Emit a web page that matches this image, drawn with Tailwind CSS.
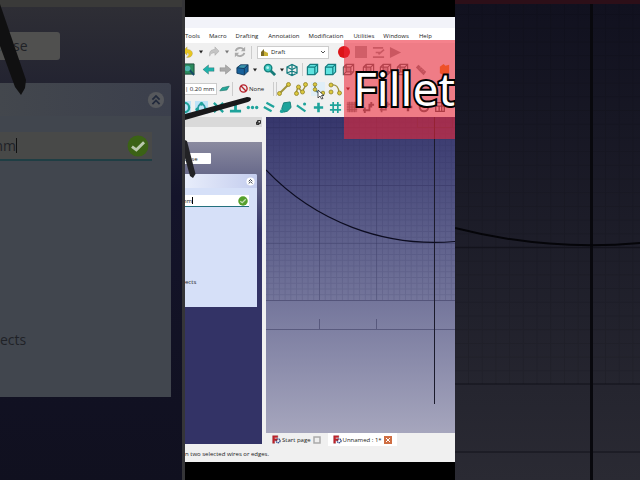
<!DOCTYPE html>
<html lang="en">

<head>
    <meta charset="UTF-8">
    <meta name="viewport" content="width=device-width, initial-scale=1.0">
    <script src="https://cdn.jsdelivr.net/npm/@tailwindcss/browser@4"></script>
    <title>Fillet</title>
</head>

<body class="bg-black font-['Open_Sans','Noto_Sans',sans-serif] text-[6px] leading-[8px] text-[#222]">

    <!-- icon sprite -->
    <svg class="hidden">
        <symbol id="undo" viewBox="0 0 14 14"><path d="M1 6l5-5v3c5 0 7 3 6 6s-4 4-7 3c3 0 4-4 1-5v3z" fill="currentColor" stroke="#0003" stroke-width=".6" /></symbol>
        <symbol id="redo" viewBox="0 0 14 14"><path d="M13 6L8 1v3C3 4 1 7 2 12c1-3 3-4 6-4v3z" fill="currentColor" stroke="#0003" stroke-width=".6" /></symbol>
        <symbol id="refresh" viewBox="0 0 14 14"><path d="M2 6c1-4 7-5 9-2M12 8c-1 4-7 5-9 2" fill="none" stroke="currentColor" stroke-width="2.200" /><path d="M13 1v5H8zM1 13V8h5z" fill="currentColor" /></symbol>
        <symbol id="left" viewBox="0 0 14 14"><path d="M1 7l6-5v3h6v4H7v3z" fill="currentColor" stroke="#0005" stroke-width=".6" /></symbol>
        <symbol id="right" viewBox="0 0 14 14"><path d="M13 7L7 2v3H1v4h6v3z" fill="currentColor" stroke="#0004" stroke-width=".6" /></symbol>
        <symbol id="caret" viewBox="0 0 6 4"><path d="M1 .5h4L3 3.500z" fill="currentColor" /></symbol>
        <symbol id="solid" viewBox="0 0 14 14"><path d="M1 5l4-3 8 0v7l-4 4-8-2z" fill="#17619b" stroke="#123a5c" /><path d="M1 5l8 1v7M9 6l4-4" stroke="#123a5c" fill="none" /><path d="M2.500 4.500l3-2h6l-3 3z" fill="#3b93a8" /></symbol>
        <symbol id="zoom" viewBox="0 0 14 14"><path d="M8 8l5 5" stroke="#167a78" stroke-width="3" /><circle cx="5.500" cy="5.500" r="4" fill="#3cc7c0" stroke="#13807c" stroke-width="1.500" /><circle cx="5" cy="5" r="1.500" fill="#b5f2ee" /></symbol>
        <symbol id="wire" viewBox="0 0 14 14"><path d="M2 4l5-2.500L12 4v6l-5 2.500L2 10zM2 4l5 2.500L12 4M7 6.500v6M7 1.500v4M2 10l5-2 5 2" fill="none" stroke="currentColor" stroke-width="1.300" /></symbol>
        <symbol id="face" viewBox="0 0 14 14"><path d="M1.500 4.500l3-3h8v8l-3 3h-8z" fill="#5fe3e0" stroke="currentColor" stroke-width="1.300" /><path d="M1.500 4.500h8v8M9.500 4.500l3-3" fill="none" stroke="currentColor" stroke-width="1.300" /></symbol>
        <symbol id="face-wire" viewBox="0 0 14 14"><path d="M1.500 4.500l3-3h8v8l-3 3h-8zM1.500 4.500h8v8M9.500 4.500l3-3M4.500 1.500v8h8M4.500 9.500l-3 3" fill="none" stroke="currentColor" stroke-width="1.300" /><path d="M5 5h4v4H5z" fill="currentColor" fill-opacity=".4" /></symbol>
        <symbol id="ruler" viewBox="0 0 14 14"><path d="M1 4l3-3 9 8-3 4z" fill="currentColor" /><path d="M5 5l2-1M7 7l2-1M9 9l2-1" stroke="#fff6" /></symbol>
        <symbol id="line" viewBox="0 0 14 14"><path d="M3 11l8-8" stroke="#a0933c" stroke-width="2" /><g fill="#dcc83c" stroke="#8f8128" stroke-width=".8"><circle cx="2.500" cy="11.500" r="2" /><circle cx="11.500" cy="2.500" r="2" /></g></symbol>
        <symbol id="poly" viewBox="0 0 14 14"><path d="M2 11l2-6 4 5 4-7" fill="none" stroke="#a0933c" stroke-width="1.500" /><g fill="#dcc83c" stroke="#8f8128" stroke-width=".8"><circle cx="2.500" cy="11.500" r="2" /><circle cx="4.500" cy="5" r="2" /><circle cx="8.500" cy="10" r="2" /><circle cx="11.500" cy="2.500" r="2" /></g></symbol>
        <symbol id="fillet" viewBox="0 0 14 14"><path d="M4 2v4c0 3 2 5 8 5" fill="none" stroke="#4f7d8c" stroke-width="1.500" /><g fill="#dcc83c" stroke="#8f8128" stroke-width=".8"><circle cx="4" cy="2.500" r="1.800" /><circle cx="4" cy="7.500" r="1.800" /><circle cx="12" cy="11" r="1.800" /></g></symbol>
        <symbol id="arc" viewBox="0 0 14 14"><path d="M3 3c5-1 8 2 8 8" fill="none" stroke="#a0933c" stroke-width="1.300" /><g fill="#dcc83c" stroke="#8f8128" stroke-width=".8"><circle cx="3" cy="3" r="2" /><circle cx="3" cy="10" r="2" /><circle cx="11.500" cy="11" r="2" /></g></symbol>
        <symbol id="plane" viewBox="0 0 14 14"><path d="M1 10l3-4 9-2-3 5z" fill="#25a99a" stroke="#157066" stroke-width=".8" /></symbol>
        <symbol id="snap-poly" viewBox="0 0 14 14"><path d="M2 11L4 5l3-3 3 3 2 6" fill="none" stroke="#2696a0" stroke-width="1.800" /><g fill="currentColor"><circle cx="2.500" cy="9" r="2" /><circle cx="7" cy="3" r="2" /><circle cx="11.500" cy="9" r="2" /></g></symbol>
        <symbol id="snap-cross" viewBox="0 0 14 14"><path d="M2 2l10 10M12 2L2 12" stroke="currentColor" stroke-width="2.500" /><circle cx="7" cy="7" r="2.500" fill="currentColor" /></symbol>
        <symbol id="snap-perp" viewBox="0 0 14 14"><path d="M7 2v8M1 11h12" stroke="currentColor" stroke-width="3" /></symbol>
        <symbol id="snap-dots" viewBox="0 0 14 14"><g fill="currentColor"><circle cx="2.500" cy="7" r="1.800" /><circle cx="7" cy="7" r="1.800" /><circle cx="11.500" cy="7" r="1.800" /></g></symbol>
        <symbol id="snap-par" viewBox="0 0 14 14"><path d="M4 2l9 5M1 7l9 5" stroke="currentColor" stroke-width="2.500" /></symbol>
        <symbol id="snap-special" viewBox="0 0 14 14"><path d="M3 8l2-6 7-1 1 6-4 4-4 1z" fill="currentColor" stroke="#137f78" /><circle cx="3" cy="11" r="2" fill="currentColor" /></symbol>
        <symbol id="snap-near" viewBox="0 0 14 14"><path d="M1 5l10 7" stroke="currentColor" stroke-width="2.500" /><circle cx="10" cy="3.500" r="1.800" fill="currentColor" /></symbol>
        <symbol id="plus" viewBox="0 0 14 14"><path d="M7 2v10M2 7h10" stroke="currentColor" stroke-width="2.800" /></symbol>
        <symbol id="hash" viewBox="0 0 14 14"><path d="M4.500 1v12M9.500 1v12M1 4.500h12M1 9.500h12" stroke="currentColor" stroke-width="1.800" /></symbol>
        <symbol id="grid" viewBox="0 0 14 14"><path d="M1 1h12v12H1z" fill="currentColor" fill-opacity=".6" /><path d="M1 4h12M1 7h12M1 10h12M4 1v12M7 1v12M10 1v12" stroke="currentColor" /></symbol>
        <symbol id="dims" viewBox="0 0 14 14"><path d="M1 10h7V4h5M3 7v6M10 1v6" fill="none" stroke="currentColor" stroke-width="2" /></symbol>
        <symbol id="ring" viewBox="0 0 14 14"><circle cx="7" cy="7" r="5" fill="none" stroke="currentColor" stroke-width="2.500" /></symbol>
        <symbol id="table" viewBox="0 0 14 14"><path d="M2 2h10v10H2zM2 6h10M6 6v6M9 2v10" fill="none" stroke="currentColor" stroke-width="1.500" /></symbol>
        <symbol id="chevrons" viewBox="0 0 20 20"><circle cx="10" cy="10" r="9" fill="currentColor" /><path d="M6 9.500l4-4 4 4M6 14.500l4-4 4 4" fill="none" stroke="#222a3c" stroke-width="2" /></symbol>
        <symbol id="check" viewBox="0 0 20 20"><circle cx="10" cy="10" r="9.500" fill="currentColor" /><path d="M4.500 10.500l4 3 7-7" fill="none" stroke="#fff" stroke-opacity=".65" stroke-width="2.600" /></symbol>
        <symbol id="freecad" viewBox="0 0 14 14"><circle cx="9.500" cy="9" r="3" fill="none" stroke="#35518f" stroke-width="2.200" stroke-dasharray="2 .7" /><path d="M1 1h8v3H4v2h4v2.500H4V13H1z" fill="#c4232b" stroke="#7d1118" stroke-width=".5" /></symbol>
    </svg>

    <div class="grid min-h-screen grid-cols-[185fr_270fr_185fr]">

        <!-- enlarged dark backdrop, left half -->
        <aside class="relative flex flex-col overflow-hidden border-r-3 border-[#353538] bg-[#11111f] text-[14px] leading-[18px] text-[#202227]">
            <div class="h-[7px] shrink-0 bg-[#3a3a39]"></div>
            <div class="flex-1 bg-linear-to-b from-[#2e2e35] via-[#14142a] via-40% to-[#10101f] pt-[25px] pr-[11px]">
                <button class="-ml-[40px] block h-[28px] w-[100px] rounded-r-[3px] bg-[#50504f] text-center">Close</button>
                <section class="mt-[23px] h-[314px] rounded-tr-[4px] bg-[#41464e]">
                    <header class="flex h-[33px] items-center justify-end rounded-tr-[4px] bg-linear-to-r from-[#43474d] to-[#3b3f4c] pr-[6px]">
                        <button aria-label="Collapse"><svg class="size-[18px] text-[#56585c]"><use href="#chevrons" /></svg></button>
                    </header>
                    <div class="mt-[16px] mr-[19px] flex h-[29px] items-center border-b-2 border-[#1f3e44] bg-[#484948] pr-[3px]">
                        <input aria-label="Radius" value="mm" class="-ml-[10px] h-[18px] w-[26px] outline-none">
                        <span class="h-[15px] w-px bg-[#111]"></span>
                        <svg class="ml-auto size-[22px] text-[#3b6215]"><use href="#check" /></svg>
                    </div>
                    <p class="mt-[170px]">ects</p>
                </section>
            </div>
            <svg class="absolute top-0 left-0 h-[100px] w-[30px]" viewBox="0 0 30 100"><path d="M0 4l26 76-1 8-4 7-6-8L0 46z" fill="#101011" /></svg>
        </aside>

        <!-- application window -->
        <main class="relative flex min-w-0 flex-col overflow-hidden border-t-[17px] border-b-[18px] border-black bg-[#f0f0f0]">
            <div class="h-[11px] shrink-0 bg-[#f2f3f9]"></div>
            <nav class="flex h-[15px] shrink-0 items-center gap-[9px] bg-white">
                <button>Tools</button>
                <button>Macro</button>
                <button>Drafting</button>
                <button class="ml-px">Annotation</button>
                <button>Modification</button>
                <button class="ml-px">Utilities</button>
                <button>Windows</button>
                <button class="ml-px">Help</button>
            </nav>

            <div class="-ml-[3px] flex h-[18px] shrink-0 items-center text-[#aaa]">
                <button aria-label="Undo"><svg class="size-[12px] text-[#e7c521]"><use href="#undo" /></svg></button>
                <svg class="mx-1 h-[4px] w-[6px] text-[#222]"><use href="#caret" /></svg>
                <button aria-label="Redo"><svg class="size-[12px] text-[#c4c4c4]"><use href="#redo" /></svg></button>
                <svg class="mx-1 h-[4px] w-[6px] text-[#777]"><use href="#caret" /></svg>
                <button aria-label="Refresh"><svg class="size-[12px]"><use href="#refresh" /></svg></button>
                <div class="mx-[5px] h-[13px] w-px bg-[#ccc]"></div>
                <div class="mr-[9px] flex h-[13px] w-[72px] items-center border border-[#ccc] bg-white px-[2px]">
                    <svg class="size-[9px]" viewBox="0 0 9 9"><path d="M1 8V4l3-3v7z" fill="#7b6a25" /><path d="M4 8V3l4 2v3z" fill="#c9b134" /></svg>
                    <select aria-label="Workbench" class="ml-[2px] w-0 flex-1 appearance-none text-[#222] outline-none"><option>Draft</option></select>
                    <svg class="h-[4px] w-[6px]" viewBox="0 0 6 4"><path d="M1 1l2 2 2-2" fill="none" stroke="#555" /></svg>
                </div>
                <button aria-label="Record macro" class="mr-[5px] size-[12px] rounded-full bg-[#dc1418]"></button>
                <button aria-label="Stop" class="mr-[5px] size-[12px] bg-[#aaa]"></button>
                <button aria-label="Macros" class="mr-[4px]"><svg class="size-[13px]" viewBox="0 0 14 14"><path d="M1 2h11M4 7h5M1 12h12M7 9l6-5" stroke="#999" stroke-width="1.800" /></svg></button>
                <button aria-label="Run"><svg class="size-[13px]" viewBox="0 0 14 14"><path d="M1 1l12 6-12 6z" fill="#999" /></svg></button>
            </div>

            <div class="-ml-[3px] flex h-[19px] shrink-0 items-center pb-[2px] text-[#147d80]">
                <button aria-label="Fit all" class="mr-[7px]"><svg class="size-[13px]" viewBox="0 0 14 14"><path d="M1 1h12v11H1z" fill="#2b8a5c" stroke="#1d4c3b" /><path d="M6 5l7 8" stroke="#154866" stroke-width="2" /><circle cx="6" cy="6" r="3" fill="#4fb5ac" /></svg></button>
                <button aria-label="Back" class="mr-[4px]"><svg class="size-[13px] text-[#1fb1aa]"><use href="#left" /></svg></button>
                <button aria-label="Forward" class="mr-[4px]"><svg class="size-[13px] text-[#aaa]"><use href="#right" /></svg></button>
                <button aria-label="Draw style"><svg class="size-[13px]"><use href="#solid" /></svg></button>
                <svg class="mx-[3px] h-[4px] w-[6px] text-[#222]"><use href="#caret" /></svg>
                <button aria-label="Zoom" class="ml-[2px]"><svg class="size-[13px]"><use href="#zoom" /></svg></button>
                <svg class="ml-[3px] h-[4px] w-[6px] text-[#222]"><use href="#caret" /></svg>
                <button aria-label="Isometric"><svg class="size-[14px]"><use href="#wire" /></svg></button>
                <div class="ml-[3px] h-[13px] w-px bg-[#ccc]"></div>
                <button aria-label="Front" class="ml-[3px]"><svg class="size-[13px]"><use href="#face" /></svg></button>
                <button aria-label="Top" class="ml-[5px]"><svg class="size-[13px]"><use href="#face" /></svg></button>
                <button aria-label="Right" class="ml-[5px] text-[#666]"><svg class="size-[13px]"><use href="#face-wire" /></svg></button>
                <button aria-label="Rear" class="ml-[7px] text-[#666]"><svg class="size-[13px]"><use href="#face-wire" /></svg></button>
                <button aria-label="Bottom" class="ml-[4px] text-[#666]"><svg class="size-[13px]"><use href="#face-wire" /></svg></button>
                <button aria-label="Left" class="ml-[4px] text-[#666]"><svg class="size-[13px]"><use href="#face-wire" /></svg></button>
                <button aria-label="Measure" class="ml-[6px] text-[#888]"><svg class="size-[12px]"><use href="#ruler" /></svg></button>
                <button aria-label="Part" class="ml-[11px]"><svg class="size-[13px]" viewBox="0 0 14 14"><path d="M2 4l4-3 2 2 4-1v9l-6 2-4-2z" fill="#ef8a14" /></svg></button>
            </div>

            <div class="flex h-[19px] shrink-0 items-center pb-[2px]">
                <input aria-label="Line width" value="| 0.20 mm" class="h-[12px] w-[32px] border border-l-0 border-[#ccc] bg-white outline-none">
                <button aria-label="Working plane" class="mx-[2px]"><svg class="size-[11px]"><use href="#plane" /></svg></button>
                <div class="h-[14px] w-px bg-[#ccc]"></div>
                <button class="ml-[6px] flex w-[34px] items-center gap-px">
                    <svg class="size-[9px]" viewBox="0 0 10 10"><circle cx="5" cy="5" r="4" fill="none" stroke="#b5202a" stroke-width="1.500" /><path d="M2 2l6 6" stroke="#b5202a" stroke-width="1.500" /></svg>
                    None
                </button>
                <div class="h-[14px] w-[4px] border-x border-[#ccc]"></div>
                <div class="flex items-center gap-[3px]">
                    <button aria-label="Line"><svg class="size-[14px]"><use href="#line" /></svg></button>
                    <button aria-label="Polyline"><svg class="size-[14px]"><use href="#poly" /></svg></button>
                    <button aria-label="Fillet" class="bg-[#e0eef7]"><svg class="size-[14px]"><use href="#fillet" /></svg></button>
                    <button aria-label="Arc"><svg class="size-[14px]"><use href="#arc" /></svg></button>
                    <svg class="h-[4px] w-[6px] text-[#722]"><use href="#caret" /></svg>
                </div>
            </div>

            <!-- snap toolbar -->
            <div class="-ml-[9px] flex h-[18px] shrink-0 items-center gap-[4px] pb-[2px] pl-[2px] text-[#1fa39b]">
                <button aria-label="Snap lock" class="bg-[#bfe3f8]"><svg class="size-[13px]"><use href="#ring" /></svg></button>
                <button aria-label="Snap endpoint" class="bg-[#bfe3f8]"><svg class="size-[13px]"><use href="#snap-poly" /></svg></button>
                <button aria-label="Snap intersection"><svg class="size-[13px]"><use href="#snap-cross" /></svg></button>
                <button aria-label="Snap perpendicular"><svg class="size-[13px]"><use href="#snap-perp" /></svg></button>
                <button aria-label="Snap extension"><svg class="size-[13px]"><use href="#snap-dots" /></svg></button>
                <button aria-label="Snap parallel"><svg class="size-[12px]"><use href="#snap-par" /></svg></button>
                <button aria-label="Snap special"><svg class="size-[13px]"><use href="#snap-special" /></svg></button>
                <button aria-label="Snap near"><svg class="size-[12px]"><use href="#snap-near" /></svg></button>
                <button aria-label="Snap ortho"><svg class="size-[13px]"><use href="#plus" /></svg></button>
                <button aria-label="Snap grid"><svg class="size-[13px]"><use href="#hash" /></svg></button>
                <button aria-label="Toggle grid" class="text-[#777]"><svg class="size-[12px]"><use href="#grid" /></svg></button>
                <button aria-label="Snap dimensions" class="text-[#666]"><svg class="size-[13px]"><use href="#dims" /></svg></button>
                <button aria-label="Snap plane" class="text-[#777]"><svg class="size-[12px]"><use href="#dims" /></svg></button>
                <button aria-label="Move" class="ml-[7px] text-[#555]"><svg class="size-[12px]"><use href="#plus" /></svg></button>
                <button aria-label="Rotate" class="text-[#666]"><svg class="size-[12px]"><use href="#ring" /></svg></button>
                <button aria-label="Array" class="text-[#555]"><svg class="size-[12px]"><use href="#table" /></svg></button>
            </div>

            <div class="flex min-h-[200px] flex-1">
                <!-- task panel -->
                <div class="mr-[4px] flex w-[77px] shrink-0 flex-col">
                    <div class="flex h-[10px] items-center justify-end bg-[#d9d9d9] pr-[1px]">
                        <button aria-label="Float"><svg class="size-[5px]" viewBox="0 0 5 5"><path d="M1.500.5h3v3h-3zM.5 2h2.500v2.500H.5z" fill="none" stroke="#333" /></svg></button>
                    </div>
                    <div class="mt-[15px] mb-[2px] flex-1 bg-linear-to-b from-[#8a8a9f] to-[#333366] to-30% pt-[11px] pr-[5px]">
                        <button class="-ml-[16px] block h-[11px] w-[42px] rounded-r-[1px] bg-white text-center">Close</button>
                        <section class="mt-[10px] h-[133px] rounded-tr-[2px] bg-[#d6e0f8]">
                            <header class="flex h-[14px] items-center justify-end rounded-tr-[2px] bg-linear-to-r from-[#e8edfb] to-[#c4cdee] pr-[2px]">
                                <button aria-label="Collapse"><svg class="size-[9px] text-white"><use href="#chevrons" /></svg></button>
                            </header>
                            <div class="mt-[7px] mr-[8px] flex h-[12px] items-center border-b border-[#23707e] bg-white pr-[1px]">
                                <input aria-label="Radius" value="mm" class="-ml-[4px] h-[10px] w-[11px] outline-none">
                                <span class="h-[7px] w-px bg-black"></span>
                                <svg class="ml-auto size-[10px] text-[#55a02c]"><use href="#check" /></svg>
                            </div>
                            <p class="mt-[71px]">ects</p>
                        </section>
                    </div>
                </div>

                <!-- 3D view -->
                <div class="flex min-w-0 flex-1 flex-col">
                    <svg class="h-0 w-full flex-1 bg-linear-to-b from-[#36366c] to-[#a6a6bd]" viewBox="0 0 189 316" preserveAspectRatio="none">
                        <defs>
                            <pattern id="minor" width="5.730" height="5.750" x="53" y="68" patternUnits="userSpaceOnUse"><path d="M0 .5h6M.5 0v6" stroke="#22224a" stroke-opacity=".13" /></pattern>
                        </defs>
                        <path d="M0 0h189v183H0z" fill="url(#minor)" />
                        <path d="M53.500 0v183M110.500 0v183M0 10.500h189M0 68.500h189M0 126.500h189" stroke="#22224a" stroke-opacity=".2" />
                        <path d="M0 183.500h189M0 212.500h189M53.500 202v10M110.500 202v10" stroke="#33335a" stroke-opacity=".5" />
                        <path d="M151.500 0v10.500h35V0" fill="none" stroke="#33335a" />
                        <path d="M168.500 0v287" stroke="#1b1b2c" />
                        <path d="M0 53A232 232 0 0 0 189 124.500" fill="none" stroke="#0c0c20" stroke-width="1.200" />
                    </svg>
                    <div class="flex h-[13px] shrink-0 items-center">
                        <button class="flex h-full items-center gap-px px-[6px]">
                            <svg class="size-[9px]"><use href="#freecad" /></svg>
                            Start page
                            <svg class="ml-px size-[8px]" viewBox="0 0 8 8"><path d="M1 1h6v6H1z" fill="#eee" stroke="#aaa" stroke-width="1.500" /></svg>
                        </button>
                        <button class="ml-px flex h-full items-center gap-px bg-white px-[5px]">
                            <svg class="size-[9px]"><use href="#freecad" /></svg>
                            Unnamed : 1*
                            <svg class="ml-px size-[8px]" viewBox="0 0 8 8"><path d="M0 0h8v8H0z" fill="#cf6e43" /><path d="M2 2l4 4M6 2L2 6" stroke="#fff" /></svg>
                        </button>
                    </div>
                </div>
            </div>
            <footer class="flex h-[16px] shrink-0 items-center">n two selected wires or edges.</footer>

            <!-- pointing arrows and cursor over the toolbars -->
            <svg class="absolute top-[73px] left-0 h-[90px] w-[80px]" viewBox="0 0 80 90">
                <path d="M0 24L62 7q4 0 4 2t-3 3L0 30z" fill="#18181a" />
                <path d="M0 50l2 1 8.500 33L8 88l-3-2-5-18z" fill="#222225" />
            </svg>
            <svg class="absolute top-[72px] left-[132px] h-[11px] w-[8px]" viewBox="0 0 8 11"><path d="M1 1v8l2-2 1.500 3L6 9.500 4.500 6.500H7z" fill="#fff" stroke="#333" stroke-width=".8" /></svg>

            <!-- caption -->
            <div class="absolute top-[23px] right-0 flex h-[99px] w-[111px] items-center overflow-hidden bg-[#ee2838]/58 pb-[4px] pl-[9px]">
                <h1 class="font-['Noto_Sans',sans-serif] text-[46px] leading-[60px] text-white [-webkit-text-stroke:4px_#000] [paint-order:stroke]">Fillet</h1>
            </div>
        </main>

        <!-- enlarged dark backdrop, right half -->
        <aside class="flex min-w-0 flex-col bg-[#12121f]">
            <div class="h-[4px] shrink-0 bg-[#2d0f18]"></div>
            <svg class="h-0 w-full flex-1 bg-linear-to-b from-[#11111f] to-[#2a2a33]" viewBox="0 4 185 476" preserveAspectRatio="none">
                <defs>
                    <pattern id="dark-minor" width="13.700" height="13.700" x="13" y="247" patternUnits="userSpaceOnUse"><path d="M0 .5h14M.5 0v14" stroke="#000" stroke-opacity=".1" /></pattern>
                </defs>
                <path d="M0 4h185v380H0z" fill="url(#dark-minor)" />
                <path d="M0 247.500h185M0 384h185M0 452h185" stroke="#0c0c14" stroke-opacity=".5" stroke-width="1.500" />
                <path d="M136.500 4v476" stroke="#08080d" stroke-width="3" />
                <path d="M0 228A550 550 0 0 0 185 243" fill="none" stroke="#050509" stroke-width="2" />
            </svg>
        </aside>
    </div>

</body>

</html>
